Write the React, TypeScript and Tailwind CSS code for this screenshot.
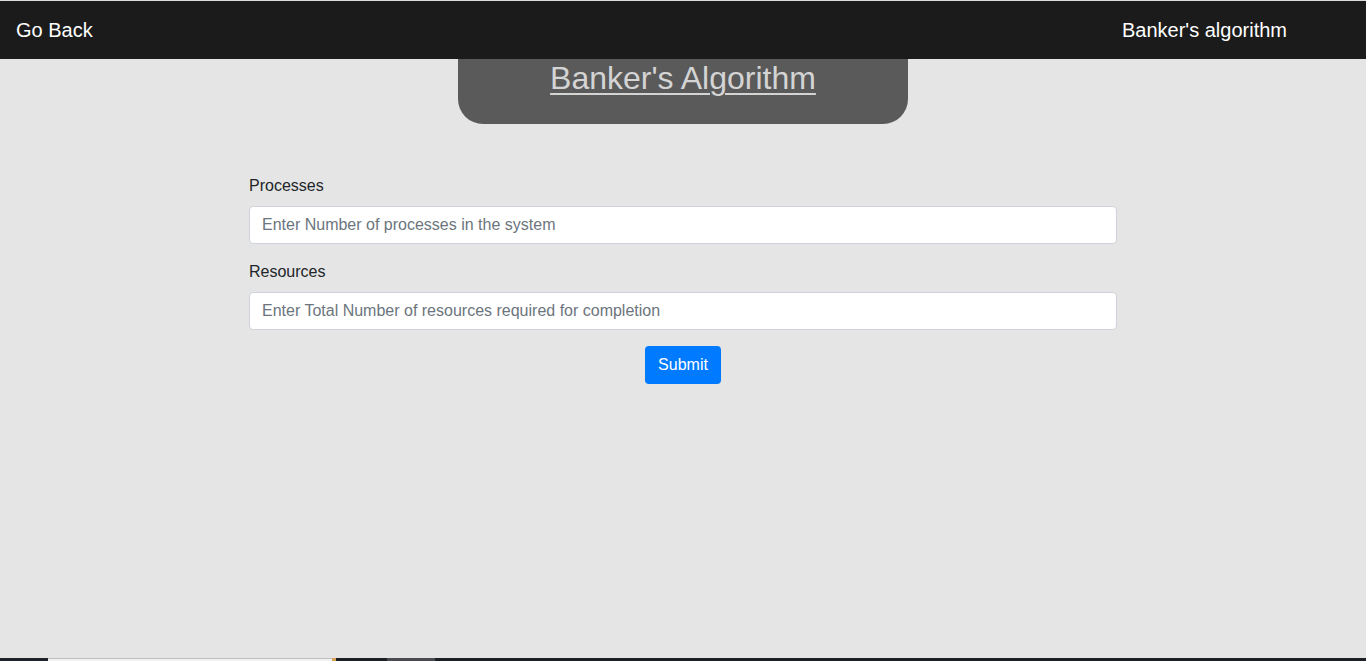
import React from "react";

export default function App() {
  return (
    <div
      className="h-[661px] w-full bg-[#e5e5e5] flex flex-col overflow-hidden"
      style={{ fontFamily: '"Liberation Sans", Arial, sans-serif' }}
    >
      {/* top line */}
      <div className="h-px bg-[#dcdcdc]" />

      {/* Navbar */}
      <nav className="h-[58px] bg-[#1b1b1b] flex items-center justify-between pl-4 pr-[79px] text-white text-[20px]">
        <a href="#" className="leading-6">Go Back</a>
        <span className="leading-6">Banker's algorithm</span>
      </nav>

      {/* Title */}
      <div className="flex justify-center">
        <div className="w-[450px] bg-[#5a5a5a] rounded-b-[25px] pb-[27px] text-center">
          <h1 className="text-[32px] leading-[38px] text-[#d4d4d4] underline underline-offset-[4px] decoration-[2px]">
            Banker's Algorithm
          </h1>
        </div>
      </div>

      {/* Form */}
      <form className="w-[868px] mx-auto mt-[50px] text-[16px] text-[#212529]">
        <div className="mb-4">
          <label className="block leading-6 mb-2">Processes</label>
          <input
            type="text"
            placeholder="Enter Number of processes in the system"
            className="block w-full h-[38px] px-3 bg-white border border-[#ced4da] rounded placeholder:text-[#6c757d] outline-none"
          />
        </div>
        <div className="mb-4">
          <label className="block leading-6 mb-2">Resources</label>
          <input
            type="text"
            placeholder="Enter Total Number of resources required for completion"
            className="block w-full h-[38px] px-3 bg-white border border-[#ced4da] rounded placeholder:text-[#6c757d] outline-none"
          />
        </div>
        <div className="flex justify-center">
          <button
            type="button"
            className="h-[38px] px-[13px] bg-[#007bff] text-white rounded leading-6"
          >
            Submit
          </button>
        </div>
      </form>

      <div className="flex-1" />

      {/* bottom strip */}
      <div className="h-[3px] flex">
        <div className="w-12 bg-[#1f232b]" />
        <div className="w-[284px] bg-[#f2f2f2] border-t border-[#bdbdbd]" />
        <div className="w-1 bg-[#d9a45a]" />
        <div className="w-[51px] bg-[#1c1f26]" />
        <div className="w-12 bg-[#4a4b52]" />
        <div className="flex-1 bg-[#1c1f26]" />
      </div>
    </div>
  );
}
